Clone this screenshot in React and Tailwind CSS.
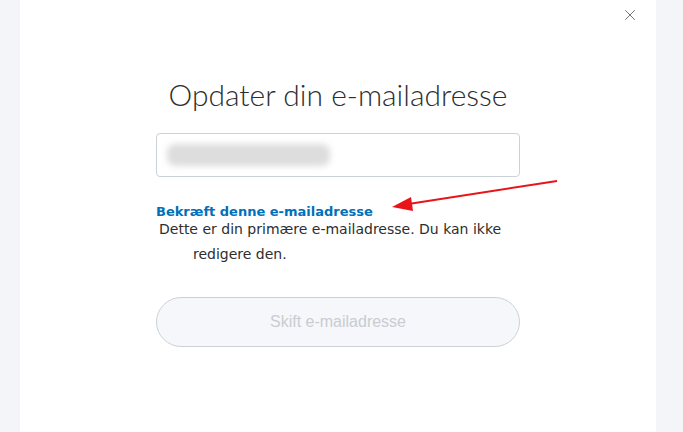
import { X } from "lucide-react";

export default function App() {
  return (
    <div className="flex h-[432px] w-full overflow-hidden bg-[#f4f5f8]">
      <div className="w-[20px] shrink-0 bg-[#f4f5f8]" />

      {/* Modal body */}
      <div className="relative flex-1 bg-white">
        <button className="absolute right-[17px] top-[6px] text-[#6c7378]" aria-label="Luk">
          <X className="h-[18px] w-[18px]" strokeWidth={1.3} />
        </button>

        <div className="ml-[136px] w-[364px] pt-[74px]">
          <h1 className="text-center font-['Lato',sans-serif] text-[30px] font-light leading-[40px] text-[#2c2e2f]">
            Opdater din e-mailadresse
          </h1>

          <div className="mt-[19px] flex h-[44px] items-center rounded-[4px] border border-[#cbd2d6] px-[10px]">
            <div className="h-[22px] w-[163px] rounded-[8px] bg-[#dddddd] blur-[3px]" />
          </div>

          <div className="relative mt-[25px]">
            <p className="font-['DejaVu_Sans',sans-serif] text-[13px] font-bold leading-[20px] text-[#0070ba]">
              Bekræft denne e-mailadresse
            </p>
            <div className="-mt-[5px] font-['DejaVu_Sans',sans-serif] text-[14px] leading-[25px] text-[#2c2e2f]">
              <p className="ml-[3px]">Dette er din primære e-mailadresse. Du kan ikke</p>
              <p className="ml-[37px]">redigere den.</p>
            </div>

            {/* red annotation arrow */}
            <svg
              className="absolute left-[228px] top-[-30px]"
              width="180"
              height="45"
              viewBox="0 0 180 45"
            >
              <line x1="173" y1="9" x2="18" y2="33" stroke="#e8141a" strokeWidth="2" />
              <polygon points="8,35 27,25 29,39" fill="#e8141a" />
            </svg>
          </div>

          <button
            disabled
            className="mt-[30px] flex h-[50px] w-full items-center justify-center rounded-full border border-[#cbd2d6] bg-[#f5f7fa] font-['Liberation_Sans',sans-serif] text-[16px] text-[#c9ccd1]"
          >
            Skift e-mailadresse
          </button>
        </div>
      </div>

      <div className="w-[27px] shrink-0 bg-[#f4f5f8]" />
    </div>
  );
}
